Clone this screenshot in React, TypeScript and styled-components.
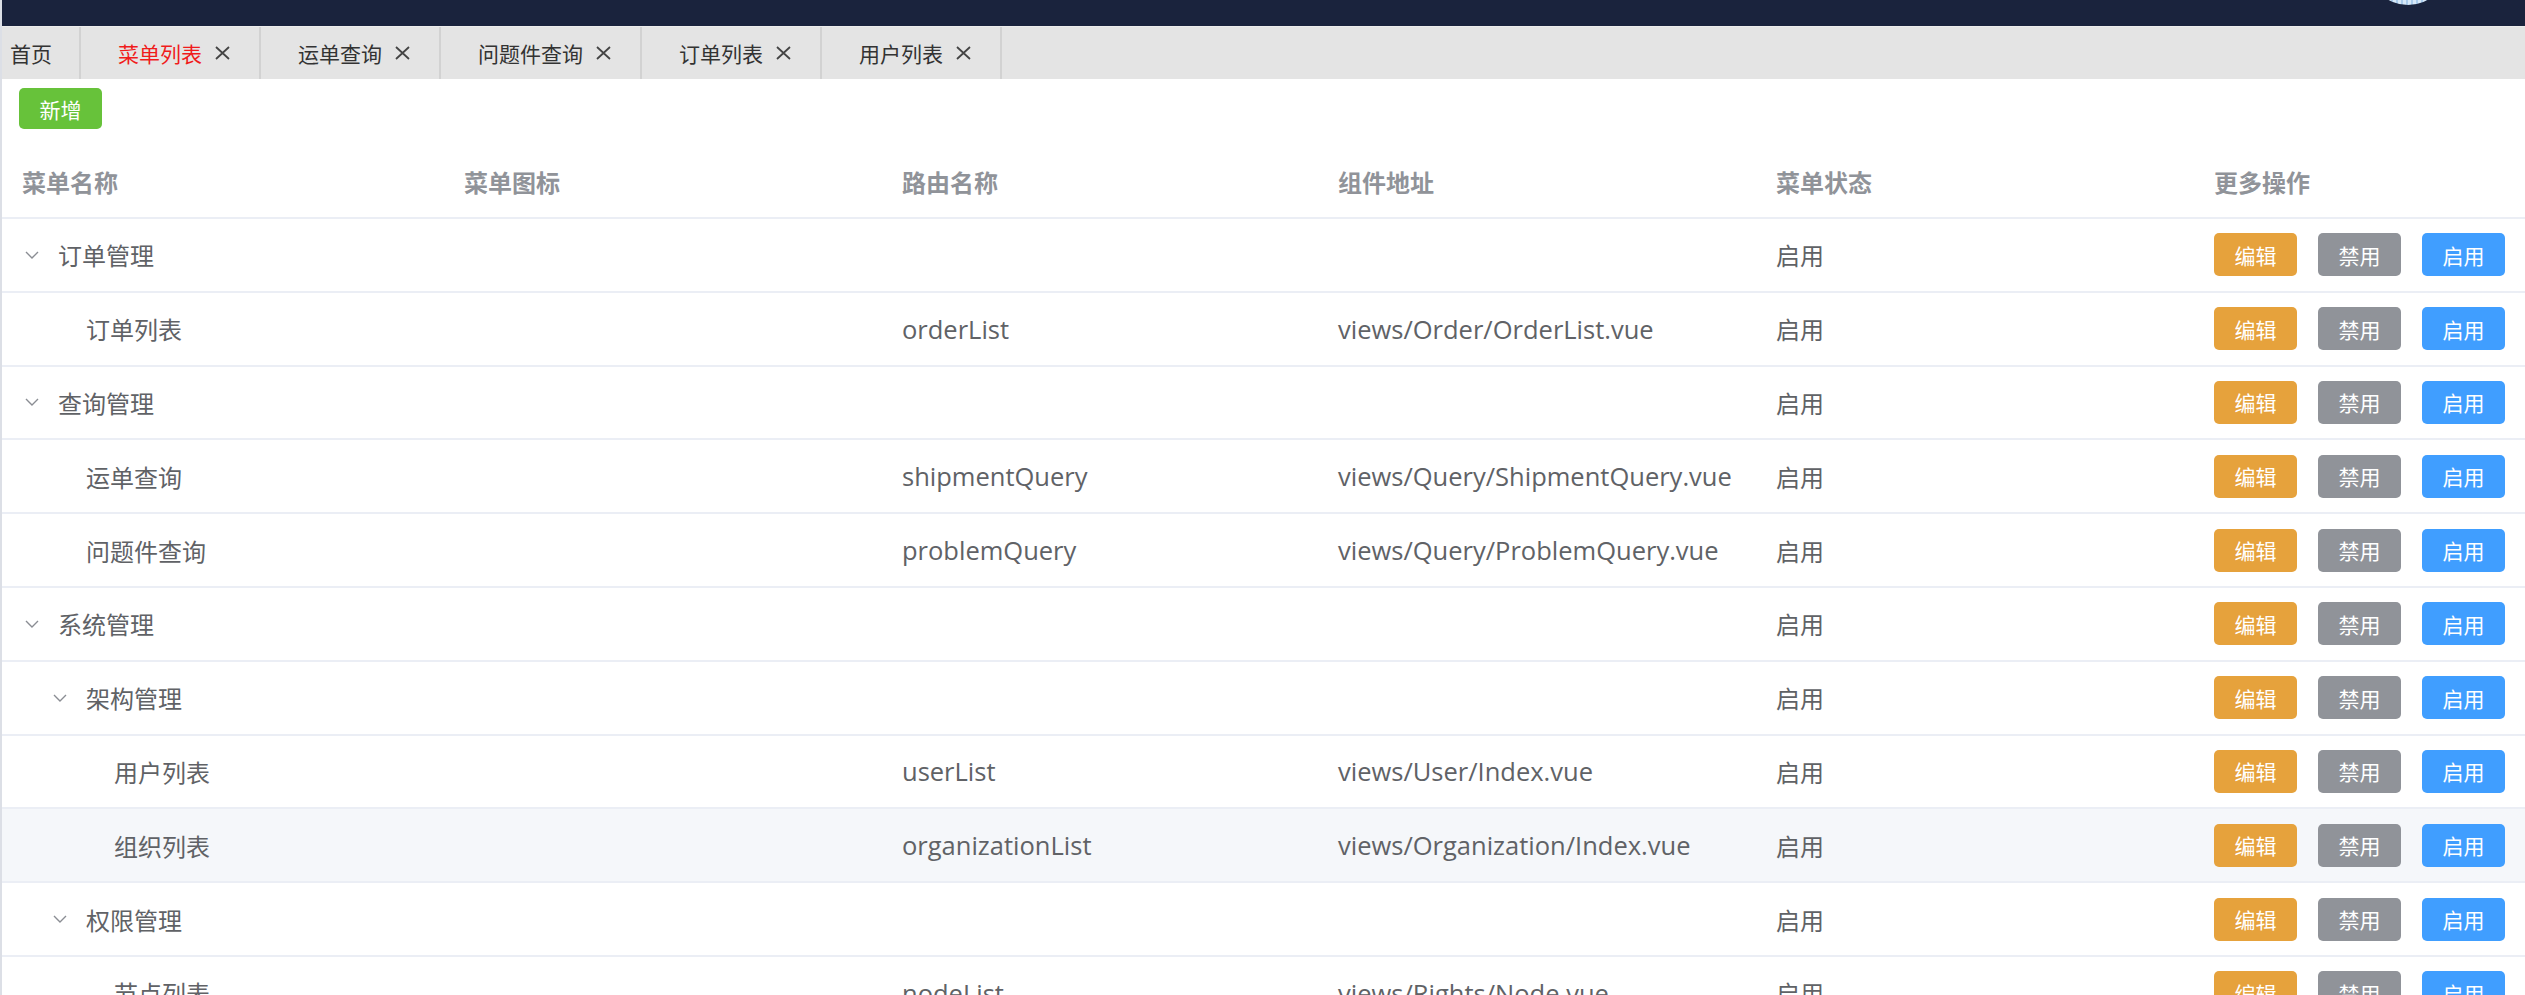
import React from 'react'
import styled, { createGlobalStyle } from 'styled-components'

const GlobalStyle = createGlobalStyle`
  html, body {
    margin: 0;
    padding: 0;
    overflow: hidden;
    background: #fff;
  }
  body {
    font-family: 'Open Sans', 'Noto Sans CJK SC', sans-serif;
  }
`

const Page = styled.div`
  width: 2525px;
  height: 995px;
  box-sizing: border-box;
  border-left: 2px solid #dcdfe6;
  overflow: hidden;
`

const TopBar = styled.div`
  position: relative;
  height: 26px;
  background: #1a233d;
  overflow: hidden;
`

const Avatar = styled.div`
  position: absolute;
  left: 2366px;
  top: -75px;
  width: 80px;
  height: 80px;
  border-radius: 50%;
  background: repeating-linear-gradient(90deg, #d6e8f8 0 3px, #a9cbec 3px 5px);
`

const TabBar = styled.div`
  display: flex;
  height: 53px;
  background: #e4e4e4;
  border-top: 1px solid #ececec;
  box-sizing: border-box;
`

const Tab = styled.div<{ active?: boolean; home?: boolean }>`
  display: flex;
  align-items: center;
  gap: 12px;
  padding: ${({ home }) => (home ? '0 27px 0 8px' : '0 28px 0 37px')};
  border-right: 2px solid #d2d2d2;
  font-size: 21px;
  color: ${({ active }) => (active ? '#f01c1c' : '#333')};
  white-space: nowrap;
`

const CloseIcon = () => (
  <svg width="17" height="14" viewBox="0 0 17 14">
    <path d="M2 1 L15 13 M15 1 L2 13" stroke="#444" strokeWidth="1.8" fill="none" />
  </svg>
)

const Toolbar = styled.div`
  height: 67px;
  box-sizing: border-box;
  padding: 9px 0 0 17px;
`

const Button = styled.button<{ tone: string }>`
  width: 83px;
  height: ${({ tone }) => (tone === 'success' ? '41px' : '43px')};
  border: none;
  border-radius: 5px;
  padding: 0;
  color: #fff;
  font-family: inherit;
  font-size: 21px;
  background: ${({ tone }) =>
    tone === 'success' ? '#67c23a' : tone === 'warning' ? '#e6a23c' : tone === 'info' ? '#909399' : '#409eff'};
`

const Table = styled.div`
  display: flex;
  flex-direction: column;
`

const Row = styled.div<{ head?: boolean; hover?: boolean }>`
  display: grid;
  grid-template-columns: 442px 438px 436px 438px 438px 1fr;
  align-items: center;
  flex: none;
  height: ${({ head }) => (head ? '73px' : '73.8px')};
  box-sizing: border-box;
  border-bottom: 2px solid #ebeef5;
  background: ${({ hover }) => (hover ? '#f5f7fa' : '#fff')};
  font-size: 24px;
  font-weight: ${({ head }) => (head ? 700 : 400)};
  color: ${({ head }) => (head ? '#909399' : '#606266')};
`

const Cell = styled.div`
  display: flex;
  align-items: center;
  padding-left: 20px;
  white-space: nowrap;
`

const CodeCell = styled(Cell)`
  font-size: 25.5px;
`

const Indent = styled.span<{ level: number }>`
  display: inline-block;
  width: ${({ level }) => level * 28}px;
`

const IconSlot = styled.span`
  display: inline-flex;
  align-items: center;
  width: 33px;
  padding-left: 3px;
`

const Actions = styled.div`
  display: flex;
  gap: 21px;
  padding-left: 20px;
`

const Chevron = () => (
  <svg width="14" height="8" viewBox="0 0 14 8">
    <polyline points="1,1 7,7 13,1" stroke="#8a8d93" strokeWidth="1.4" fill="none" />
  </svg>
)

const tabs = [
  { label: '首页', home: true },
  { label: '菜单列表', active: true },
  { label: '运单查询' },
  { label: '问题件查询' },
  { label: '订单列表' },
  { label: '用户列表' },
]

const columns = ['菜单名称', '菜单图标', '路由名称', '组件地址', '菜单状态', '更多操作']

type MenuRow = {
  name: string
  level: number
  expandable?: boolean
  route?: string
  path?: string
  hover?: boolean
}

const rows: MenuRow[] = [
  { name: '订单管理', level: 0, expandable: true },
  { name: '订单列表', level: 1, route: 'orderList', path: 'views/Order/OrderList.vue' },
  { name: '查询管理', level: 0, expandable: true },
  { name: '运单查询', level: 1, route: 'shipmentQuery', path: 'views/Query/ShipmentQuery.vue' },
  { name: '问题件查询', level: 1, route: 'problemQuery', path: 'views/Query/ProblemQuery.vue' },
  { name: '系统管理', level: 0, expandable: true },
  { name: '架构管理', level: 1, expandable: true },
  { name: '用户列表', level: 2, route: 'userList', path: 'views/User/Index.vue' },
  { name: '组织列表', level: 2, route: 'organizationList', path: 'views/Organization/Index.vue', hover: true },
  { name: '权限管理', level: 1, expandable: true },
  { name: '节点列表', level: 2, route: 'nodeList', path: 'views/Rights/Node.vue' },
]

const App: React.FC = () => {
  return (
    <Page>
      <GlobalStyle />
      <TopBar>
        <Avatar />
      </TopBar>
      <TabBar>
        {tabs.map((tab) => (
          <Tab key={tab.label} active={tab.active} home={tab.home}>
            {tab.label}
            {!tab.home && <CloseIcon />}
          </Tab>
        ))}
      </TabBar>
      <Toolbar>
        <Button tone="success">新增</Button>
      </Toolbar>
      <Table>
        <Row head>
          {columns.map((col) => (
            <Cell key={col}>{col}</Cell>
          ))}
        </Row>
        {rows.map((row) => (
          <Row key={row.name} hover={row.hover}>
            <Cell>
              <Indent level={row.level} />
              <IconSlot>{row.expandable && <Chevron />}</IconSlot>
              {row.name}
            </Cell>
            <Cell />
            <CodeCell>{row.route}</CodeCell>
            <CodeCell>{row.path}</CodeCell>
            <Cell>启用</Cell>
            <Actions>
              <Button tone="warning">编辑</Button>
              <Button tone="info">禁用</Button>
              <Button tone="primary">启用</Button>
            </Actions>
          </Row>
        ))}
      </Table>
    </Page>
  )
}

export default App
